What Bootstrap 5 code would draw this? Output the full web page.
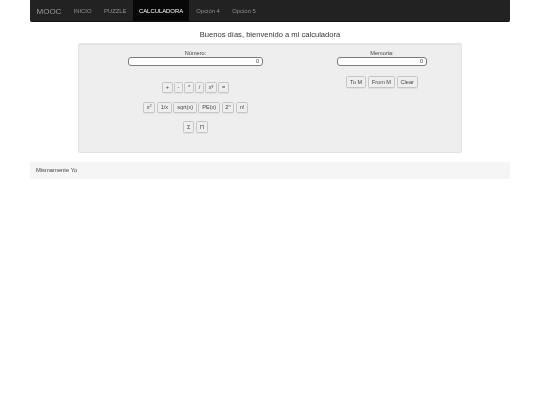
<!DOCTYPE html>
<html lang="es"><head><meta charset="utf-8"><title>Calculadora</title>
<link rel="stylesheet" href="https://cdn.jsdelivr.net/npm/bootstrap@5.3.0/dist/css/bootstrap.min.css">
<style>
body{font-family:"Liberation Sans",Arial,sans-serif;color:#333;background:#fff;font-size:7px}
.shell{width:480px;margin:0 auto;filter:blur(.4px)}
.topbar{background:#222;height:22px;border-radius:0 0 2px 2px;border-bottom:1px solid #111;padding:0}
.brandname{color:#9d9d9d;font-size:8px;padding:0 6px 0 6.5px;line-height:23px}
.topitem{color:#8f8f8f;font-size:5.9px;line-height:23px;padding:0 6.2px;text-decoration:none;display:block}
.topitem.on{color:#fff;background:#080808;margin-right:.8px}
.greet{font-size:7.6px;text-align:center;line-height:10px;margin:8px 0 3px;height:10px;color:#333}
.calcwell{width:384px;height:110px;margin:0 auto;background:#eee;border:1px solid #e3e3e3;border-radius:2px;box-shadow:inset 0 1px 1px rgba(0,0,0,.05);padding-top:6px}
.leftpane{width:233px}
.rightpane{width:140px}
.fieldlabel{font-size:5.6px;line-height:7px;text-align:center;height:7px;color:#444}
.numfield{display:block;height:9px;border:1px solid #7a7a7a;border-radius:3px;background:#fff;font-size:5.6px;line-height:7px;text-align:right;padding:0 3px;color:#444}
.numwide{width:135px}
.numnarrow{width:90px}
.keys{gap:1.5px}
.keybtn{font-size:5.6px;line-height:7px;color:#444;background:#eee;border:1px solid #c6c6c6;border-radius:1.5px;padding:1px 3px;height:11px;box-shadow:0 1px 0 rgba(0,0,0,.05);white-space:nowrap}
.keybtn sup{font-size:3.8px;top:-.4em;line-height:0}
.r1{margin-top:16px}.r2{margin-top:9px}.r3{margin-top:8px}
.r1 .keybtn{padding:1px 2.5px}
.r2 .keybtn{padding:1px 2.8px}
.keybig{height:12px}
.memrow{margin-top:10px}
.pagefoot{background:#f5f5f5;height:17px;margin-top:9px;font-size:5.8px;line-height:17px;padding-left:6px;color:#444}
</style></head><body>
<div class="shell">
<nav class="topbar d-flex">
<span class="brandname">MOOC</span>
<a class="topitem" href="#">INICIO</a><a class="topitem" href="#">PUZZLE</a><a class="topitem on" href="#">CALCULADORA</a><a class="topitem" href="#">Opción 4</a><a class="topitem" href="#">Opción 5</a>
</nav>
<p class="greet">Buenos días, bienvenido a mi calculadora</p>
<div class="calcwell d-flex">
<div class="leftpane d-flex flex-column align-items-center">
<div class="fieldlabel">Número:</div>
<output class="numfield numwide">0</output>
<div class="keys d-flex r1"><button class="keybtn">+</button><button class="keybtn">-</button><button class="keybtn">*</button><button class="keybtn">/</button><button class="keybtn">x<sup>y</sup></button><button class="keybtn">=</button></div>
<div class="keys d-flex r2"><button class="keybtn">x<sup>2</sup></button><button class="keybtn">1/x</button><button class="keybtn">sqrt(x)</button><button class="keybtn">PE(x)</button><button class="keybtn">2<sup>n</sup></button><button class="keybtn">n!</button></div>
<div class="keys d-flex r3"><button class="keybtn keybig">Σ</button><button class="keybtn keybig">Π</button></div>
</div>
<div class="rightpane d-flex flex-column align-items-center">
<div class="fieldlabel">Memoria:</div>
<output class="numfield numnarrow">0</output>
<div class="keys d-flex memrow"><button class="keybtn keybig">To M</button><button class="keybtn keybig">From M</button><button class="keybtn keybig">Clear</button></div>
</div>
</div>
<footer class="pagefoot">Mismamente Yo</footer>
</div>
<script src="https://cdn.jsdelivr.net/npm/bootstrap@5.3.0/dist/js/bootstrap.bundle.min.js"></script>
</body></html>
